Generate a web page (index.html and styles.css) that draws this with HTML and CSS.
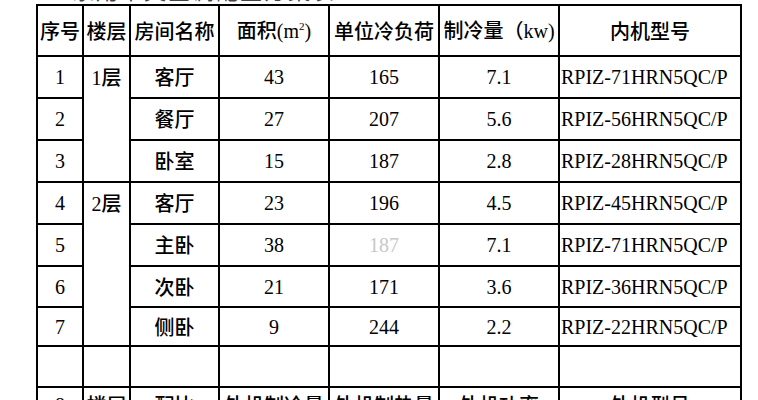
FILE: index.html
```html
<!DOCTYPE html>
<html lang="zh">
<head>
<meta charset="utf-8">
<link rel="stylesheet" href="styles.css">
</head>
<body>
<div class="title"><span>家用中央空调配置方案表</span></div>
<table class="spec">
  <colgroup>
    <col class="c1"><col class="c2"><col class="c3"><col class="c4"><col class="c5"><col class="c6"><col class="c7">
  </colgroup>
  <tr class="head">
    <th>序号</th><th>楼层</th><th>房间名称</th><th>面积<span class="num">(m<sup>2</sup>)</span></th><th>单位冷负荷</th><th>制冷量（<span class="num">kw)</span></th><th>内机型号</th>
  </tr>
  <tr><td class="num">1</td><td class="floor" rowspan="3"><span class="num">1</span>层</td><td>客厅</td><td class="num">43</td><td class="num">165</td><td class="num">7.1</td><td class="num model">RPIZ-71HRN5QC/P</td></tr>
  <tr><td class="num">2</td><td>餐厅</td><td class="num">27</td><td class="num">207</td><td class="num">5.6</td><td class="num model">RPIZ-56HRN5QC/P</td></tr>
  <tr><td class="num">3</td><td>卧室</td><td class="num">15</td><td class="num">187</td><td class="num">2.8</td><td class="num model">RPIZ-28HRN5QC/P</td></tr>
  <tr><td class="num">4</td><td class="floor" rowspan="4"><span class="num">2</span>层</td><td>客厅</td><td class="num">23</td><td class="num">196</td><td class="num">4.5</td><td class="num model">RPIZ-45HRN5QC/P</td></tr>
  <tr><td class="num">5</td><td>主卧</td><td class="num">38</td><td class="num faded">187</td><td class="num">7.1</td><td class="num model">RPIZ-71HRN5QC/P</td></tr>
  <tr class="r6"><td class="num">6</td><td>次卧</td><td class="num">21</td><td class="num">171</td><td class="num">3.6</td><td class="num model">RPIZ-36HRN5QC/P</td></tr>
  <tr class="r7"><td class="num">7</td><td>侧卧</td><td class="num">9</td><td class="num">244</td><td class="num">2.2</td><td class="num model">RPIZ-22HRN5QC/P</td></tr>
  <tr class="blank"><td></td><td></td><td></td><td></td><td></td><td></td><td></td></tr>
  <tr class="out"><td class="num">8</td><td>楼层</td><td>配比</td><td>外机制冷量</td><td>外机制热量</td><td>外机功率</td><td>外机型号</td></tr>
</table>
</body>
</html>
```
FILE: styles.css
```css
html, body {
  margin: 0;
  padding: 0;
  background: #ffffff;
}
body {
  font-family: "Noto Sans CJK SC", "Liberation Serif", sans-serif;
  color: #000;
  overflow: hidden;
  height: 400px;
}
.title {
  height: 4px;
  overflow: hidden;
  padding-left: 72px;
}
.title span {
  display: block;
  font-size: 22px;
  line-height: 22px;
  margin-top: -22px;
  letter-spacing: 2px;
  color: #444;
}
.spec {
  margin-left: 36px;
  border-collapse: collapse;
  table-layout: fixed;
  width: 704px;
  font-size: 20px;
  font-weight: 500;
}
.c1 { width: 46px; }
.c2 { width: 47px; }
.c3 { width: 89px; }
.c4 { width: 110px; }
.c5 { width: 110px; }
.c6 { width: 120px; }
.c7 { width: 182px; }
.spec th, .spec td {
  border: 2px solid #000;
  padding: 0;
  text-align: center;
  vertical-align: middle;
  height: 40px;
  font-weight: 500;
  white-space: nowrap;
  overflow: hidden;
  line-height: 24px;
}
.spec tr.head th {
  height: 49px;
}
.spec tr.r6 td { height: 39px; }
.spec tr.r7 td { height: 37px; }
.spec tr.blank td { height: 39px; }
.spec tr.out td {
  vertical-align: top;
  padding-top: 5px;
  height: 34px;
}
.num {
  font-family: "Liberation Serif", "Noto Sans CJK SC", serif;
}
.spec td.floor {
  vertical-align: top;
  padding-top: 8px;
}
.spec td.model {
  text-align: left;
  padding-left: 1px;
}
sup {
  font-size: 11px;
  line-height: 0;
  vertical-align: 8px;
}
.faded {
  color: #c8c8c8;
}
```
